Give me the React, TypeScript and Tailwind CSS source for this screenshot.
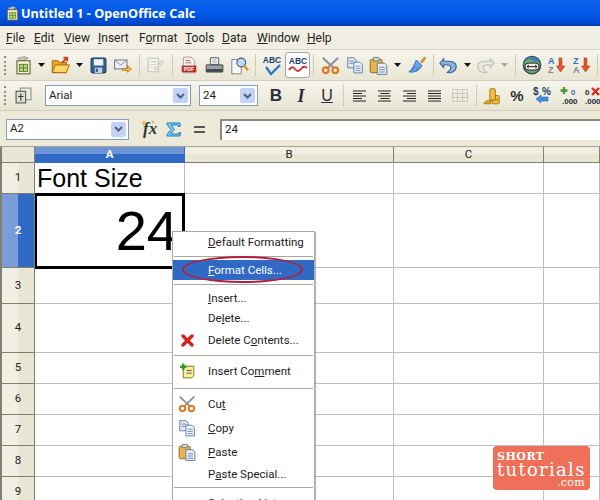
import React from "react";

const S = ({ s = 18, children, className = "" }: { s?: number; children: React.ReactNode; className?: string }) => (
  <svg width={s} height={s} viewBox="0 0 16 16" className={className}>{children}</svg>
);

const Sheet = ({ s }: { s?: number }) => (
  <S s={s}>
    <path d="M3 2 L9 0.5 L12 2 L6 4Z" fill="#c9c9c0" stroke="#77776a" strokeWidth=".5" />
    <rect x="2.5" y="4" width="11" height="11" fill="#f6f3c8" stroke="#6b6b50" />
    <rect x="4.5" y="7" width="7" height="6" fill="#b7d77a" stroke="#4f7a1f" strokeWidth=".7" />
    <path d="M8 7V13M4.5 10H11.5" stroke="#4f7a1f" strokeWidth=".7" />
  </S>
);
const Caret = ({ light }: { light?: boolean }) => (
  <svg width="7" height="4" viewBox="0 0 7 4"><path d="M0 0H7L3.5 4Z" fill={light ? "#a9a9a0" : "#111"} /></svg>
);
const Open = () => (
  <S s={19}>
    <path d="M1 4H6L7 5.5H13V14H1Z" fill="#e9a92a" stroke="#a2660c" strokeWidth=".8" />
    <path d="M1 14L3.5 7.5H15.5L13 14Z" fill="#fbd366" stroke="#a2660c" strokeWidth=".8" />
    <path d="M9 6L13 2M10.5 1.5H13.5V4.5" stroke="#d8401f" strokeWidth="1.7" fill="none" />
  </S>
);
const Save = () => (
  <S s={17}>
    <rect x="1" y="1" width="14" height="14" rx="1.5" fill="#2f5f93" stroke="#1c3b63" />
    <rect x="3.5" y="2" width="9" height="6" fill="#eef3f8" />
    <rect x="4.5" y="10" width="7" height="5" fill="#c7d4e2" />
    <rect x="5.5" y="11" width="2" height="3" fill="#2f5f93" />
  </S>
);
const Mail = () => (
  <S s={18}>
    <rect x="0.5" y="3.5" width="11" height="8" fill="#eef0f6" stroke="#7c7f99" />
    <path d="M1 4L6 8L11 4" stroke="#7c7f99" fill="none" strokeWidth=".8" />
    <path d="M7.5 11H12V8.5L15.5 11.5L12 14.5V12.8H7.5Z" fill="#f3b53a" stroke="#b26f0c" strokeWidth=".6" />
  </S>
);
const Edit = () => (
  <S s={18}>
    <path d="M2 2H11V14H2Z" fill="#f4f3ec" stroke="#c4c4b8" />
    <path d="M4 5H9M4 7.5H9M4 10H8" stroke="#cfcfc4" />
    <path d="M8 11L14 4L15.5 5.5L9.5 12L7.5 12.5Z" fill="#e2e1d6" stroke="#bdbdb0" strokeWidth=".6" />
  </S>
);
const Pdf = () => (
  <S s={18}>
    <path d="M3 1H10L13 4V15H3Z" fill="#f4f1ee" stroke="#9a8f8f" strokeWidth=".7" />
    <rect x="1.5" y="8.5" width="13" height="6" fill="#b92f2a" />
    <text x="8" y="13.3" fontSize="4.6" fontWeight="700" textAnchor="middle" fill="#fff" fontFamily="Liberation Sans, sans-serif">PDF</text>
    <path d="M5 4H9M5 6H10" stroke="#b0605c" strokeWidth=".8" />
  </S>
);
const Print = () => (
  <S s={19}>
    <path d="M4.5 1.5H11.5V7H4.5Z" fill="#fff" stroke="#55585f" strokeWidth=".8" />
    <path d="M6 3.3H10M6 5H10" stroke="#8a8d94" strokeWidth=".7" />
    <path d="M1 7.5H15V13.5H1Z" fill="#9ea2a8" stroke="#3d4046" strokeWidth=".8" />
    <rect x="1.4" y="11" width="13.2" height="2.2" fill="#3f434a" />
    <rect x="11.5" y="8.7" width="2" height="1.2" fill="#6cc04a" />
  </S>
);
const Preview = () => (
  <S s={19}>
    <path d="M1.5 3H9.5V15H1.5Z" fill="#f7f7f4" stroke="#7d8086" strokeWidth=".8" />
    <circle cx="9.5" cy="5.5" r="3.7" fill="#bcdcf5" stroke="#44617f" strokeWidth="1" />
    <path d="M12 8.3L15.3 12" stroke="#d99a2a" strokeWidth="2" />
  </S>
);
const Spell = () => (
  <svg width="24" height="22" viewBox="0 0 24 22">
    <text x="12" y="9" fontSize="8.5" fontWeight="700" textAnchor="middle" fill="#1b3f72" fontFamily="Liberation Sans, sans-serif">ABC</text>
    <path d="M6 13L11 20L20 11" stroke="#2b78c8" strokeWidth="2.4" fill="none" />
  </svg>
);
const AutoSpell = () => (
  <svg width="22" height="20" viewBox="0 0 22 20">
    <text x="11" y="9" fontSize="8.5" fontWeight="700" textAnchor="middle" fill="#1b3f72" fontFamily="Liberation Sans, sans-serif">ABC</text>
    <path d="M2 15Q5 10 8 14T14 14T20 13" stroke="#d12a24" strokeWidth="1.8" fill="none" />
  </svg>
);
const Cut = ({ s = 19 }: { s?: number }) => (
  <S s={s}>
    <path d="M1.5 1.5L11 10.5M14.5 1.5L5 10.5" stroke="#8b8f96" strokeWidth="1.6" />
    <circle cx="4" cy="12" r="2.4" fill="none" stroke="#df7a22" strokeWidth="1.8" />
    <circle cx="12" cy="12" r="2.4" fill="none" stroke="#df7a22" strokeWidth="1.8" />
  </S>
);
const Copy = ({ s = 18 }: { s?: number }) => (
  <S s={s}>
    <path d="M1.5 1.5H7L9 3.5V10.5H1.5Z" fill="#dfe8f3" stroke="#5c7aa0" strokeWidth=".8" />
    <path d="M3 4.5H7M3 6.5H7" stroke="#5c7aa0" strokeWidth=".7" />
    <path d="M7 5.5H12.5L14.5 7.5V15H7Z" fill="#eff4fa" stroke="#5c7aa0" strokeWidth=".8" />
    <path d="M8.5 9H13M8.5 11H13M8.5 13H13" stroke="#5c7aa0" strokeWidth=".7" />
  </S>
);
const Paste = ({ s = 19 }: { s?: number }) => (
  <S s={s}>
    <rect x="1" y="3" width="10" height="11" rx="1" fill="#e9b44c" stroke="#8b6a20" strokeWidth=".8" />
    <rect x="3.5" y="1.2" width="5" height="3" rx=".7" fill="#d6d7da" stroke="#60646a" strokeWidth=".7" />
    <path d="M7 6H13L15 8V15.5H7Z" fill="#eaf0f7" stroke="#5c7aa0" strokeWidth=".8" />
    <path d="M8.5 9.5H13.5M8.5 11.5H13.5M8.5 13.5H13.5" stroke="#5c7aa0" strokeWidth=".7" />
  </S>
);
const Brush = () => (
  <S s={20}>
    <path d="M11 5L14 1.5L15 2.5L12 6.5Z" fill="#e0a22a" stroke="#98690f" strokeWidth=".5" />
    <path d="M7.5 4L12 8.5C10.5 11.5 7 14.5 1.5 13.5C4 12 5.5 8 7.5 4Z" fill="#69a8e6" stroke="#2c5f9e" strokeWidth=".7" />
    <path d="M4 12.5L7 9M7 13L9.5 9.5" stroke="#2c5f9e" strokeWidth=".6" />
  </S>
);
const Undo = ({ off }: { off?: boolean }) => (
  <S s={20} className={off ? "-scale-x-100" : ""}>
    <path d="M4.5 3L1.5 6.5L4.5 10V8H8C10.5 8 11 11 9 12.5L7.5 14C12 15 15 12 14.5 8.5C14 5.5 11.5 5 8 5H4.5Z" fill={off ? "#e9e8e0" : "#8db2dc"} stroke={off ? "#bdbdb2" : "#3b6291"} strokeWidth=".9" />
  </S>
);
const Nav = () => (
  <S s={20}>
    <circle cx="8" cy="8" r="7" fill="#6fa66b" stroke="#2f4f5c" strokeWidth="1" />
    <path d="M2 6Q5 2 8 4T14 6L13 3L8 1.5L3 3Z" fill="#3f7fae" />
    <rect x="2.5" y="6.5" width="11" height="5.5" rx="2.5" fill="#f1f1ee" stroke="#2b2b2b" strokeWidth=".8" />
    <path d="M4 9.3H12M4 9.3L5.5 8M4 9.3L5.5 10.6M12 9.3L10.5 8M12 9.3L10.5 10.6" stroke="#222" strokeWidth=".8" fill="none" />
  </S>
);
const Sort = ({ a, b, ca, cb }: { a: string; b: string; ca: string; cb: string }) => (
  <svg width="22" height="20" viewBox="0 0 22 20" fontFamily="Liberation Sans, sans-serif" fontWeight="700" fontSize="9">
    <text x="2" y="9" fill={ca}>{a}</text>
    <text x="2" y="18" fill={cb}>{b}</text>
    <path d="M12 3H15V11H18L13.5 17L9.5 11H12Z" transform="translate(1 0)" fill="#e0582a" stroke="#a12f10" strokeWidth=".5" />
  </svg>
);
const Grip = () => <div className="w-[2px] h-[19px] ml-[4px] mr-[5px] border-l-2 border-dotted border-[#8f8d7c]" />;
const Sep = ({ w }: { w: string }) => (
  <div className={`${w} flex justify-center shrink-0`}><div className="w-px h-[22px] bg-[#cfccb9]" /></div>
);
const Slot = ({ w, children }: { w: string; children: React.ReactNode }) => (
  <div className={`${w} h-full flex items-center justify-center shrink-0`}>{children}</div>
);
const Lines = ({ kind }: { kind: "l" | "c" | "r" | "j" }) => {
  const sets = {
    l: [[1, 14], [1, 10], [1, 14], [1, 10], [1, 14]],
    c: [[1, 14], [3.5, 12.5], [1, 14], [3.5, 12.5], [1, 14]],
    r: [[1, 14], [5, 14], [1, 14], [5, 14], [1, 14]],
    j: [[1, 14], [1, 14], [1, 14], [1, 14], [1, 14]],
  }[kind];
  return (
    <svg width="15" height="12" viewBox="0 0 15 12">
      {sets.map(([a, b], i) => <path key={i} d={`M${a} ${1 + i * 2.5}H${b}`} stroke="#222" strokeWidth="1" />)}
    </svg>
  );
};
const Combo = ({ w, text }: { w: string; text: string }) => (
  <div className={`${w} h-[21px] shrink-0 bg-white border border-[#7f9db9] flex items-center pl-[3px] pr-[2px] text-[11.5px] text-[#222]`}>
    <span className="flex-1">{text}</span>
    <div className="w-[15px] h-[15px] rounded-[2px] bg-[#c3d3f5] flex items-center justify-center">
      <svg width="9" height="6" viewBox="0 0 9 6"><path d="M1 1L4.5 4.5L8 1" stroke="#4d6185" strokeWidth="2" fill="none" /></svg>
    </div>
  </div>
);

const M = ({ h, icon, children, sel }: { h: string; icon?: React.ReactNode; children?: React.ReactNode; sel?: boolean }) => (
  <div className={`${h} flex items-center ${sel ? "bg-[#316ac5] text-white" : "text-[#222]"}`}>
    <div className="w-[28px] flex justify-center shrink-0">{icon}</div>
    <div className="ml-[7px] pt-px whitespace-nowrap">{children}</div>
  </div>
);
const MSep = ({ h }: { h: string }) => (
  <div className={`${h} flex items-center px-px`}><div className="h-px w-full bg-[#a9a89c]" /></div>
);
const RowH = ({ n, sel }: { n: number; sel?: boolean }) => (
  <div className={`border-r border-b border-l-2 border-[#80806f] flex items-center justify-center text-[11.5px] ${sel ? "bg-[linear-gradient(90deg,#7c9cd8_0%,#7c9cd8_50%,#316ac5_50%)] text-white font-bold" : "bg-[linear-gradient(90deg,#f1efe3_0%,#f1efe3_50%,#e9e6d6_50%)] text-[#222]"}`}>{n}</div>
);
const C = () => <div className="border-r border-b border-[#c0c0c0] bg-white" />;
const ColH = ({ t, sel }: { t: string; sel?: boolean }) => (
  <div className={`border-r border-b flex items-center justify-center text-[11.5px] ${sel ? "border-[#316ac5] bg-[linear-gradient(180deg,#6c94d6_0%,#6c94d6_50%,#316ac5_50%)] text-white font-bold" : "border-[#80806f] bg-[linear-gradient(180deg,#f1efe3_0%,#f1efe3_50%,#e9e6d6_50%)] text-[#222]"}`}>{t}</div>
);

export default function App() {
  return (
    <div className="relative w-[600px] h-[500px] overflow-hidden bg-[#ece9d8] font-['Roboto','Noto_Sans',sans-serif] text-[12px] leading-none">
      {/* Title bar */}
      <div className="h-[26px] flex items-center pl-[5px] gap-[1px] bg-[linear-gradient(180deg,#0f5fe6_0%,#0a62ee_12%,#0054e3_60%,#0047cc_90%,#0038a8_100%)]">
        <Sheet s={15} />
        <span className="text-white font-bold text-[12.7px] font-['Noto_Sans',sans-serif]">Untitled 1 - OpenOffice Calc</span>
      </div>
      {/* Menu */}
      <div className="h-[24px] flex items-center pl-[6px] bg-[#f1efe3] border-b border-[#d8d5c3] text-[12px] text-[#222]">
        <span className="w-[28px]"><u>F</u>ile</span>
        <span className="w-[30px]"><u>E</u>dit</span>
        <span className="w-[34px]"><u>V</u>iew</span>
        <span className="w-[41px]"><u>I</u>nsert</span>
        <span className="w-[46px]">F<u>o</u>rmat</span>
        <span className="w-[37px]"><u>T</u>ools</span>
        <span className="w-[35px]"><u>D</u>ata</span>
        <span className="w-[50px]"><u>W</u>indow</span>
        <span><u>H</u>elp</span>
      </div>
      {/* Toolbar 1 */}
      <div className="h-[31px] flex items-center bg-[linear-gradient(180deg,#f6f5ec,#e8e5d4)] border-b border-[#d3d0bf]">
        <Grip />
        <Slot w="w-[24px]"><Sheet s={19} /></Slot>
        <Slot w="w-[12px]"><Caret /></Slot>
        <Slot w="w-[26px]"><Open /></Slot>
        <Slot w="w-[12px]"><Caret /></Slot>
        <Slot w="w-[26px]"><Save /></Slot>
        <Slot w="w-[24px]"><Mail /></Slot>
        <Sep w="w-[8px]" />
        <Slot w="w-[24px]"><Edit /></Slot>
        <Sep w="w-[10px]" />
        <Slot w="w-[24px]"><Pdf /></Slot>
        <Slot w="w-[26px]"><Print /></Slot>
        <Slot w="w-[24px]"><Preview /></Slot>
        <Sep w="w-[8px]" />
        <Slot w="w-[26px]"><Spell /></Slot>
        <Slot w="w-[25px]"><div className="w-[25px] h-[26px] bg-white border border-[#a8a8a0] rounded-[3px] flex items-center justify-center"><AutoSpell /></div></Slot>
        <Sep w="w-[6px]" />
        <Slot w="w-[28px]"><Cut /></Slot>
        <Slot w="w-[22px]"><Copy /></Slot>
        <Slot w="w-[24px]"><Paste /></Slot>
        <Slot w="w-[14px]"><Caret /></Slot>
        <Slot w="w-[26px]"><Brush /></Slot>
        <Sep w="w-[6px]" />
        <Slot w="w-[24px]"><Undo /></Slot>
        <Slot w="w-[14px]"><Caret /></Slot>
        <Slot w="w-[24px]"><Undo off /></Slot>
        <Slot w="w-[12px]"><Caret light /></Slot>
        <Sep w="w-[10px]" />
        <Slot w="w-[24px]"><Nav /></Slot>
        <Slot w="w-[26px]"><Sort a="A" b="Z" ca="#2f6fc0" cb="#7d8793" /></Slot>
        <Slot w="w-[24px]"><Sort a="Z" b="A" ca="#2f6fc0" cb="#7d8793" /></Slot>
        <Sep w="w-[6px]" />
      </div>
      {/* Toolbar 2 */}
      <div className="h-[29px] flex items-center bg-[linear-gradient(180deg,#f6f5ec,#e8e5d4)]">
        <Grip />
        <Slot w="w-[24px]">
          <S s={17}>
            <rect x="5" y="1" width="10" height="11" fill="#eeeee6" stroke="#8b8b80" />
            <rect x="1" y="4" width="9" height="11" fill="#dcdcd2" stroke="#55554d" />
            <path d="M5.5 6V13M3 9H8" stroke="#333" strokeWidth="1" />
          </S>
        </Slot>
        <div className="w-[10px] shrink-0" />
        <Combo w="w-[146px]" text="Arial" />
        <div className="w-[8px] shrink-0" />
        <Combo w="w-[59px]" text="24" />
        <div className="w-[6px] shrink-0" />
        <Slot w="w-[24px]"><span className="font-['Liberation_Sans',sans-serif] font-bold text-[17px] text-[#2a3039]">B</span></Slot>
        <Slot w="w-[26px]"><span className="font-['Liberation_Serif',serif] font-bold italic text-[18px] text-[#2a3039]">I</span></Slot>
        <Slot w="w-[26px]"><span className="font-['Liberation_Sans',sans-serif] text-[16px] underline text-[#2a3039]">U</span></Slot>
        <Sep w="w-[6px]" />
        <Slot w="w-[26px]"><Lines kind="l" /></Slot>
        <Slot w="w-[25px]"><Lines kind="c" /></Slot>
        <Slot w="w-[25px]"><Lines kind="r" /></Slot>
        <Slot w="w-[25px]"><Lines kind="j" /></Slot>
        <Slot w="w-[25px]">
          <svg width="16" height="13" viewBox="0 0 16 13"><path d="M.5.5H15.5V12.5H.5ZM.5 4.5H15.5M.5 8.5H15.5M5.5.5V12.5M10.5.5V12.5" fill="none" stroke="#c9c8bc" /></svg>
        </Slot>
        <Sep w="w-[8px]" />
        <Slot w="w-[24px]">
          <S s={18}>
            <path d="M1 14C3 12 5 11.5 7 12V15H1Z" fill="#e3a52a" stroke="#9a6a10" strokeWidth=".6" />
            <rect x="8" y="11" width="6.5" height="4" rx="1" fill="#f0bd3e" stroke="#9a6a10" strokeWidth=".7" />
            <rect x="8" y="7.5" width="6.5" height="4" rx="1" fill="#f0bd3e" stroke="#9a6a10" strokeWidth=".7" />
            <rect x="6" y="1.5" width="5" height="10" rx="1" fill="#f0bd3e" stroke="#9a6a10" strokeWidth=".7" />
          </S>
        </Slot>
        <Slot w="w-[26px]"><span className="font-['Liberation_Sans',sans-serif] font-bold text-[15px] text-[#2a3039]">%</span></Slot>
        <Slot w="w-[27px]">
          <svg width="24" height="20" viewBox="0 0 24 20" fontFamily="Liberation Sans, sans-serif" fontWeight="700" fontSize="10" fill="#1c3a5e">
            <text x="1" y="9">$</text><text x="10" y="9">%</text>
            <path d="M16 11H9V9L4 13L9 17V15H16Z" fill="#3f8fdc" stroke="#1f5b9c" strokeWidth=".5" />
          </svg>
        </Slot>
        <Slot w="w-[25px]">
          <svg width="22" height="20" viewBox="0 0 22 20" fontFamily="Liberation Sans, sans-serif" fontWeight="700" fontSize="8">
            <path d="M5 1V8M1.5 4.5H8.5" stroke="#4f9a2a" strokeWidth="2.4" />
            <text x="12" y="9" fill="#3f6fb0">0</text>
            <text x="3" y="18" fill="#1c2a3a">.000</text>
          </svg>
        </Slot>
        <Slot w="w-[25px]">
          <svg width="22" height="20" viewBox="0 0 22 20" fontFamily="Liberation Sans, sans-serif" fontWeight="700" fontSize="8">
            <text x="1" y="9" fill="#1c2a3a">0</text>
            <path d="M8 2L15 9M15 2L8 9" stroke="#d9281e" strokeWidth="2.4" />
            <text x="1" y="18" fill="#1c2a3a">.000</text>
          </svg>
        </Slot>
      </div>
      {/* Formula bar */}
      <div className="h-[36px] flex items-center pl-[6px] pt-[1px] bg-[#ece9d8] border-t border-[#cfccb9]">
        <Combo w="w-[123px]" text="A2" />
        <div className="w-[8px] shrink-0" />
        <Slot w="w-[24px]">
          <svg width="20" height="20" viewBox="0 0 20 20">
            <path d="M5 1L5.8 3.2L8 4L5.8 4.8L5 7L4.2 4.8L2 4L4.2 3.2Z" fill="#e8b22c" />
            <path d="M14 1L14.6 2.4L16 3L14.6 3.6L14 5L13.4 3.6L12 3L13.4 2.4Z" fill="#e8b22c" />
            <text x="4" y="15" fontFamily="Liberation Serif, serif" fontStyle="italic" fontWeight="700" fontSize="17" fill="#2b3a3a">fx</text>
          </svg>
        </Slot>
        <Slot w="w-[24px]">
          <svg width="15" height="15" viewBox="0 0 15 15"><path d="M1 1H14V4.5H12.5L12 3H5L8.5 7.5L4.5 12H12.5L13 10.5H14.5L14 14H1V12.5L5 7.5L1 2.5Z" fill="#7fcbef" stroke="#1a7fbd" strokeWidth="1" /></svg>
        </Slot>
        <Slot w="w-[28px]"><svg width="11" height="7" viewBox="0 0 11 7"><path d="M0 1H11M0 6H11" stroke="#555" strokeWidth="2" /></svg></Slot>
        <div className="w-[7px] shrink-0" />
        <div className="flex-1 h-[21px] bg-white border-l-2 border-t-2 border-[#8b897c] flex items-center pl-[3px] text-[11.5px] text-[#222]">24</div>
      </div>
      {/* Sheet */}
      <div className="grid grid-cols-[35px_150px_209px_150px_56px] grid-rows-[16px_31px_74px_36px_49px_31px_31px_31px_31px_31px] border-t border-[#a5a393]">
        <div className="border-l-2 border-r border-b border-[#80806f] bg-[#e9e6d6]" />
        <ColH t="A" sel />
        <ColH t="B" />
        <ColH t="C" />
        <ColH t="" />

        <RowH n={1} />
        <div className="border-r border-[#c0c0c0] bg-white flex items-center pl-[2px] font-['Liberation_Sans',sans-serif] text-[25px] text-black">Font Size</div>
        <C /><C /><C />

        <RowH n={2} sel />
        <div className="relative z-10 -my-px border-[3px] border-l-2 border-black bg-white flex items-center justify-end pr-[4px] font-['Liberation_Sans',sans-serif] text-[56px] text-black">24</div>
        <C /><C /><C />

        {[3, 4, 5, 6, 7, 8, 9, 10].map((n) => (
          <React.Fragment key={n}>
            <RowH n={n} /><C /><C /><C /><C />
          </React.Fragment>
        ))}
      </div>

      {/* Context menu */}
      <div className="absolute z-20 left-[172px] top-[231px] w-[143px] h-[290px] bg-white border border-[#a9a99f] text-[11.5px] shadow-[1px_1px_1px_rgba(0,0,0,0.25)]">
        <M h="h-[20px]"><u>D</u>efault Formatting</M>
        <MSep h="h-[8px]" />
        <M h="h-[20px]" sel><u>F</u>ormat Cells...</M>
        <MSep h="h-[8px]" />
        <M h="h-[20px]"><u>I</u>nsert...</M>
        <M h="h-[20px]">De<u>l</u>ete...</M>
        <M h="h-[24px]" icon={<svg width="13" height="13" viewBox="0 0 13 13"><path d="M2 2L11 11M11 2L2 11" stroke="#d9241c" strokeWidth="3.4" strokeLinecap="round" /></svg>}>Delete C<u>o</u>ntents...</M>
        <MSep h="h-[7px]" />
        <M h="h-[25px]" icon={
          <S s={17}>
            <path d="M4 3H14V12L12 14H4Z" fill="#f8ee9c" stroke="#7d7430" strokeWidth=".9" />
            <path d="M7 7H12M7 9.5H12" stroke="#555" strokeWidth=".9" />
            <path d="M4 0.5V6.5M1 3.5H7" stroke="#3c9a2a" strokeWidth="2.2" />
          </S>
        }>Insert Co<u>m</u>ment</M>
        <MSep h="h-[8px]" />
        <M h="h-[24px]" icon={<Cut s={18} />}>Cu<u>t</u></M>
        <M h="h-[24px]" icon={<Copy s={18} />}><u>C</u>opy</M>
        <M h="h-[24px]" icon={<Paste s={18} />}><u>P</u>aste</M>
        <M h="h-[20px]">P<u>a</u>ste Special...</M>
        <MSep h="h-[6px]" />
        <M h="h-[26px]">Selection List</M>
      </div>

      {/* Highlight oval */}
      <div className="absolute z-30 left-[182px] top-[256px] w-[121px] h-[27px] rounded-[50%] border-2 border-[#b3203f]" />

      {/* Watermark logo */}
      <div className="absolute z-30 left-[493px] top-[446px] w-[97px] h-[44px] rounded-[4px] bg-[#ee7059] text-white font-['DejaVu_Serif',serif] flex flex-col pl-[4px] pr-[5px] pt-[6px]">
        <span className="h-[10px] text-[11px] font-bold leading-[10px] tracking-[0.5px]">SHORT</span>
        <span className="h-[16px] text-[18px] leading-[16px] tracking-[1.3px] whitespace-nowrap">tutorials</span>
        <span className="h-[10px] text-[11px] leading-[10px] tracking-[0.3px] self-end">.com</span>
      </div>
    </div>
  );
}
